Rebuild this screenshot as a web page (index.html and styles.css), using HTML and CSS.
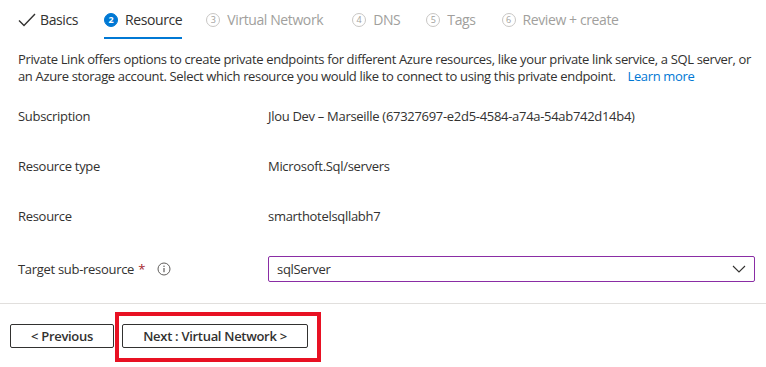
FILE: index.html
```html
<!DOCTYPE html>
<html lang="en">
<head>
    <meta charset="UTF-8">
    <title>Create a private endpoint - Resource</title>
    <link rel="stylesheet" href="styles.css">
</head>
<body>
    <div class="wizard">
        <nav class="steps">
            <div class="step done">
                <svg class="check" viewBox="0 0 18 14" width="18" height="14"><path d="M1 7.5l5 5L17 1" fill="none" stroke="#323130" stroke-width="1.4"/></svg>
                <span>Basics</span>
            </div>
            <div class="step active">
                <span class="num">2</span>
                <span>Resource</span>
            </div>
            <div class="step vnet">
                <span class="num">3</span>
                <span>Virtual Network</span>
            </div>
            <div class="step dns">
                <span class="num">4</span>
                <span>DNS</span>
            </div>
            <div class="step tags">
                <span class="num">5</span>
                <span>Tags</span>
            </div>
            <div class="step">
                <span class="num">6</span>
                <span>Review + create</span>
            </div>
        </nav>

        <div class="content">
            <p class="intro">Private Link offers options to create private endpoints for different Azure resources, like your private link service, a SQL server, or an Azure storage account. Select which resource you would like to connect to using this private endpoint.<a href="#">Learn more</a></p>

            <div class="field">
                <div class="label">Subscription</div>
                <div class="value">Jlou Dev – Marseille (67327697-e2d5-4584-a74a-54ab742d14b4)</div>
            </div>
            <div class="field">
                <div class="label">Resource type</div>
                <div class="value">Microsoft.Sql/servers</div>
            </div>
            <div class="field">
                <div class="label">Resource</div>
                <div class="value">smarthotelsqllabh7</div>
            </div>
            <div class="field target">
                <div class="label">Target sub-resource <span class="req">*</span>
                    <svg class="info" viewBox="0 0 14 14" width="14" height="14"><circle cx="7" cy="7" r="6" fill="none" stroke="#605e5c" stroke-width="1"/><rect x="6.4" y="6" width="1.2" height="4.2" fill="#605e5c"/><circle cx="7" cy="4.2" r="0.75" fill="#605e5c"/></svg>
                </div>
                <div class="select">
                    <span>sqlServer</span>
                    <svg viewBox="0 0 14 8" width="14" height="8"><path d="M1 1l6 6 6-6" fill="none" stroke="#323130" stroke-width="1.1"/></svg>
                </div>
            </div>
        </div>

        <footer class="actions">
            <button class="btn prev">&lt; Previous</button>
            <div class="highlight">
                <button class="btn">Next : Virtual Network &gt;</button>
            </div>
        </footer>
    </div>
</body>
</html>
```

FILE: styles.css
```css
body { margin: 0; background: #fff; color: #323130; font-family: "Open Sans", "Noto Sans", sans-serif; font-size: 13px; }
.wizard { width: 766px; height: 367px; overflow: hidden; }

.steps { display: flex; align-items: stretch; height: 39px; padding-left: 18px; }
.step { display: flex; align-items: center; gap: 7px; margin-right: 24px; color: #a19f9d; font-size: 14px; letter-spacing: -0.4px; border-bottom: 2px solid transparent; padding-top: 2px; box-sizing: border-box; }
.step.done { color: #323130; gap: 4px; margin-right: 26px; }
.step.active { color: #323130; border-bottom-color: #0078d4; }
.step.vnet { margin-right: 29px; }
.step.dns, .step.tags { margin-right: 26px; }
.step .num { width: 14px; height: 14px; border: 1px solid #c8c6c4; border-radius: 50%; box-sizing: border-box; font-size: 9px; letter-spacing: 0; display: flex; align-items: center; justify-content: center; line-height: 1; }
.step.active .num { background: #0078d4; border-color: #0078d4; color: #fff; font-weight: 700; }

.content { padding: 0 8px 0 18px; }
.intro { max-width: 740px; margin: 12px 0 6px; line-height: 17px; letter-spacing: -0.35px; }
.intro a { color: #0078d4; text-decoration: none; margin-left: 12px; }

.field { display: flex; align-items: center; height: 50px; letter-spacing: -0.3px; }
.field .label { width: 250px; flex-shrink: 0; display: flex; align-items: center; }
.field.target { height: 56px; }
.req { color: #a4262c; margin-left: 4px; }
.info { margin-left: 12px; }
.select { flex: 1; height: 24px; margin-right: 3px; border: 1px solid #8a2da5; border-radius: 2px; display: flex; align-items: center; justify-content: space-between; padding: 0 8px 0 8px; }

.actions { border-top: 1px solid #e1dfdd; margin-top: 6px; display: flex; align-items: flex-start; gap: 1px; padding: 8px 0 0 10px; }
.btn { height: 24px; padding: 0 20px; border: 1px solid #323130; border-radius: 2px; background: #fff; color: #323130; font-family: inherit; font-size: 13px; font-weight: 600; letter-spacing: -0.3px; }
.btn.prev { width: 104px; margin-top: 12px; }
.highlight { border: 4px solid #e81123; padding: 8px 9px 10px 3px; }
.highlight .btn { width: 186px; }
```
